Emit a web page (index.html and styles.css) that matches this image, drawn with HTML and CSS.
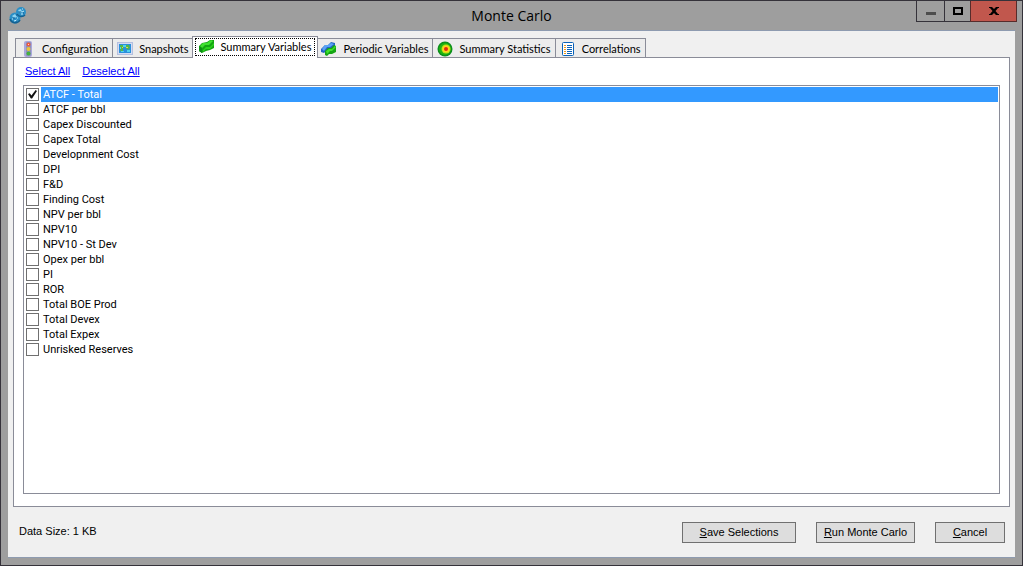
FILE: index.html
```html
<!DOCTYPE html>
<html lang="en">

<head>
    <meta charset="UTF-8">
    <meta name="viewport" content="width=device-width, initial-scale=1.0">
    <title>Monte Carlo</title>
    <link rel="stylesheet" href="styles.css">
</head>

<body>
    <div class="window">
        <header class="titlebar">
            <svg class="app-icon" width="18" height="18" viewBox="0 0 18 18">
                <circle cx="12" cy="6" r="5" fill="#2b8fc6" />
                <circle cx="6" cy="12" r="5.5" fill="#2b8fc6" />
                <path d="M8 8a5 5 0 0 0 8 1M1 13a5.500 5.500 0 0 0 10 1" fill="none" stroke="#15608f" stroke-width="1.500" />
                <path d="M9 4l3-1 1 3-2 1zM3 10l3-2 2 3-3 1z" fill="#8fd4f2" />
                <path d="M13 6l2-1M5 15l3-1M13 3h1M3 13h1M8 12h1M12 8h2" stroke="#c5ecfb" />
                <path d="M10 6h2M14 7h1M4 12h2M7 9h1M7 15h1" stroke="#185f94" />
            </svg>
            <h1>Monte Carlo</h1>
            <div class="caption-buttons">
                <button type="button" class="minimize" aria-label="Minimize">
                    <svg width="10" height="9" viewBox="0 0 10 9"><path d="M0 5h10v3H0z" fill="#4d4d4d" /></svg>
                </button>
                <button type="button" class="maximize" aria-label="Maximize">
                    <svg width="10" height="8" viewBox="0 0 10 8"><path d="M1 1h8v6H1z" fill="none" stroke="#000" stroke-width="2" /></svg>
                </button>
                <button type="button" class="close" aria-label="Close">
                    <svg width="10" height="8" viewBox="0 0 10 8"><path d="M0 0h3l2 2 2-2h3v1H9L6.500 4 9 7h1v1H7L5 6 3 8H0V7h1l2.500-3L1 1H0z" fill="#000" /></svg>
                </button>
            </div>
        </header>

        <main class="client">
            <nav class="tabs" role="tablist">
                <button type="button" class="tab" role="tab">
                    <svg width="16" height="16" viewBox="0 0 16 16">
                        <rect x="4" y="0" width="8" height="16" rx="2" fill="#aaa8dc" />
                        <rect x="6" y="1" width="5" height="14" rx="1" fill="#8e90bd" />
                        <circle cx="8.5" cy="3.5" r="2" fill="#f0583c" />
                        <circle cx="8.5" cy="8" r="2" fill="#e9c43c" />
                        <circle cx="8.5" cy="12.5" r="2" fill="#43b13f" />
                        <path d="M8 3h1v1H8z" fill="#ffd9c8" />
                    </svg>
                    Configuration
                </button>
                <button type="button" class="tab" role="tab">
                    <svg width="16" height="16" viewBox="0 0 16 16">
                        <rect x="0.5" y="1.5" width="15" height="12" fill="#d4dcf2" stroke="#b4bfdf" />
                        <rect x="2" y="3" width="12" height="9" fill="#2a90dc" />
                        <path d="M3 4h4l1 2-2 1 0 3-2 1-1-3zM9 4h3l1 3-2 2-2-2z" fill="#52b848" />
                        <path d="M6 4h3v2H6zM4 10h3v1H4zM10 9h3v2h-3zM3 6h1v2H3z" fill="#4fd3ee" />
                        <path d="M9 6h2v1H9zM5 6h1v1H5z" fill="#e0d84b" />
                    </svg>
                    Snapshots
                </button>
                <button type="button" class="tab active" role="tab" aria-selected="true">
                    <svg width="16" height="16" viewBox="0 0 16 16">
                        <path d="M0 7l3-3 5-1 3-2h4v8l-4 2-4 1-4 2-3-2z" fill="#14a513" />
                        <path d="M1 7l3-3 4 0 4-3 2 1-4 4-4 0-3 3z" fill="#3ee02f" />
                        <path d="M4 11l3-3h4l4-4v2l-4 4-4 0-3 3z" fill="#2bd31d" />
                        <path d="M0 7l3 2v5l-3-2z" fill="#0b8f14" />
                    </svg>
                    Summary Variables
                </button>
                <button type="button" class="tab" role="tab">
                    <svg width="16" height="16" viewBox="0 0 16 16">
                        <path d="M0 8l4-4h3l3-3 4 1v4l-4 3-4 0-3 3-3-1z" fill="#2464c4" />
                        <path d="M1 8l3-4h3l3-2 3 1-4 3H6L3 10z" fill="#5aa4f5" />
                        <path d="M4 10l3-3h3l3-3 2 1v6l-4 2-3 0-2 2-2-1z" fill="#14a513" />
                        <path d="M5 10l3-2h3l3-3 1 1-4 4H9l-3 3z" fill="#3ee02f" />
                    </svg>
                    Periodic Variables
                </button>
                <button type="button" class="tab" role="tab">
                    <svg width="16" height="16" viewBox="0 0 16 16">
                        <circle cx="8" cy="8" r="7.5" fill="#0c8f1c" />
                        <circle cx="8" cy="8" r="6" fill="#22b510" />
                        <circle cx="9" cy="8" r="4.5" fill="#b8e31a" />
                        <circle cx="9" cy="8" r="3.5" fill="#ffd21c" />
                        <circle cx="9" cy="8" r="2" fill="#e02a12" />
                    </svg>
                    Summary Statistics
                </button>
                <button type="button" class="tab" role="tab">
                    <svg width="16" height="16" viewBox="0 0 16 16">
                        <rect x="2.5" y="1.5" width="11" height="13" rx="1" fill="#fff" stroke="#0a62b8" />
                        <path d="M4 4.5h2M4 6.5h2M4 8.5h2M4 10.5h2M4 12.5h2" stroke="#f09a1a" />
                        <path d="M7 4.5h5M7 6.5h5M7 8.5h5M7 10.5h5M7 12.5h5" stroke="#0a62b8" />
                    </svg>
                    Correlations
                </button>
            </nav>

            <section class="tab-page" role="tabpanel">
                <div class="links">
                    <a href="#all">Select All</a>
                    <a href="#none">Deselect All</a>
                </div>

                <div class="checklist">
                    <label class="item selected"><input type="checkbox" checked><span>ATCF - Total</span></label>
                    <label class="item"><input type="checkbox"><span>ATCF per bbl</span></label>
                    <label class="item"><input type="checkbox"><span>Capex Discounted</span></label>
                    <label class="item"><input type="checkbox"><span>Capex Total</span></label>
                    <label class="item"><input type="checkbox"><span>Developnment Cost</span></label>
                    <label class="item"><input type="checkbox"><span>DPI</span></label>
                    <label class="item"><input type="checkbox"><span>F&amp;D</span></label>
                    <label class="item"><input type="checkbox"><span>Finding Cost</span></label>
                    <label class="item"><input type="checkbox"><span>NPV per bbl</span></label>
                    <label class="item"><input type="checkbox"><span>NPV10</span></label>
                    <label class="item"><input type="checkbox"><span>NPV10 - St Dev</span></label>
                    <label class="item"><input type="checkbox"><span>Opex per bbl</span></label>
                    <label class="item"><input type="checkbox"><span>PI</span></label>
                    <label class="item"><input type="checkbox"><span>ROR</span></label>
                    <label class="item"><input type="checkbox"><span>Total BOE Prod</span></label>
                    <label class="item"><input type="checkbox"><span>Total Devex</span></label>
                    <label class="item"><input type="checkbox"><span>Total Expex</span></label>
                    <label class="item"><input type="checkbox"><span>Unrisked Reserves</span></label>
                </div>
            </section>

            <footer>
                <p>Data Size: 1 KB</p>
                <div class="actions">
                    <button type="button" class="save"><u>S</u>ave Selections</button>
                    <button type="button" class="run"><u>R</u>un Monte Carlo</button>
                    <button type="button" class="cancel"><u>C</u>ancel</button>
                </div>
            </footer>
        </main>
    </div>
</body>

</html>
```

FILE: styles.css
```css
* {
    box-sizing: border-box;
}

body {
    margin: 0;
    font-family: "Liberation Sans", Arial, sans-serif;
    font-size: 11px;
    line-height: 15px;
    color: #000;
}

button {
    font: inherit;
    color: inherit;
}

.window {
    display: flex;
    flex-direction: column;
    min-height: 100vh;
    padding: 0 7px 7px;
    background-color: #9e9e9e;
    border: 1px solid #35323a;
}

/* title bar */
.titlebar {
    display: grid;
    grid-template-columns: 1fr auto 1fr;
    align-items: start;
    height: 29px;
}

.app-icon {
    margin: 5px 0 0 1px;
}

h1 {
    margin: 0;
    font-family: "Open Sans", "Noto Sans", sans-serif;
    font-size: 14px;
    font-weight: normal;
    line-height: 29px;
}

.caption-buttons {
    display: flex;
    justify-self: end;
    margin-right: -2px;
}

.caption-buttons button {
    display: flex;
    align-items: center;
    justify-content: center;
    width: 28px;
    height: 21px;
    padding: 0;
    background-color: #9e9e9e;
    border: 1px solid #35323a;
    border-top: 0;
    border-right: 0;
}

.caption-buttons .maximize {
    width: 26px;
}

.caption-buttons .close {
    width: 47px;
    background-color: #c1574d;
    border: 1px solid #562c2b;
    border-top: 0;
}

/* window content */
.client {
    flex: 1;
    display: flex;
    flex-direction: column;
    padding: 5px 5px 0;
    background-color: #f0f0f0;
    border-top: 1px solid #8e9bb0;
    border-bottom: 1px solid #8e9bb0;
}

.tabs {
    display: flex;
    align-items: flex-end;
    padding-left: 2px;
    font-family: Lato, "Liberation Sans", Arial, sans-serif;
}

.tab {
    display: flex;
    align-items: center;
    gap: 6px;
    height: 19px;
    padding: 1px 4px 0;
    background-color: #ececec;
    border: 1px solid #8a8c98;
    border-bottom: 0;
    white-space: nowrap;
}

.tab + .tab {
    margin-left: -1px;
}

.tab.active {
    position: relative;
    height: 22px;
    margin: 0 -1px -1px -2px;
    padding: 0 6px 2px;
    background-color: #fff;
}

.tab.active::after {
    content: "";
    position: absolute;
    inset: 1px 2px 2px;
    border: 1px dotted #000;
}

.tab-page {
    flex: 1;
    display: flex;
    flex-direction: column;
    padding: 6px 9px 12px;
    background-color: #fff;
    border: 1px solid #8a8c98;
}

.links {
    display: flex;
    gap: 12px;
    margin-bottom: 6px;
    padding-left: 2px;
}

.links a {
    color: #00f;
}

.checklist {
    flex: 1;
    padding: 1px;
    border: 1px solid #8a8c98;
    font-family: Roboto, "Liberation Sans", sans-serif;
}

.item {
    display: flex;
    align-items: center;
    height: 15px;
    padding-left: 1px;
}

.item span {
    flex: 1;
    margin-left: 2px;
    padding-left: 2px;
    line-height: 15px;
}

.item.selected span {
    color: #fff;
    background-color: #3399ff;
}

.item input {
    appearance: none;
    width: 13px;
    height: 13px;
    margin: 0;
    background-color: #fff;
    border: 1px solid #707070;
}

.item input:checked::before {
    content: "";
    display: block;
    width: 9px;
    height: 9px;
    margin: 1px;
    background-color: #111;
    clip-path: polygon(0 45%, 20% 35%, 38% 60%, 85% 0, 100% 12%, 45% 95%, 32% 95%);
}

footer {
    display: flex;
    justify-content: space-between;
    padding: 15px 5px 14px 6px;
}

footer p {
    margin: 2px 0 0;
}

.actions {
    display: flex;
    gap: 20px;
}

.actions button {
    height: 21px;
    padding: 0;
    background-color: #ddd;
    border: 1px solid #707070;
}

.actions .save {
    width: 114px;
}

.actions .run {
    width: 99px;
}

.actions .cancel {
    width: 70px;
}
```
